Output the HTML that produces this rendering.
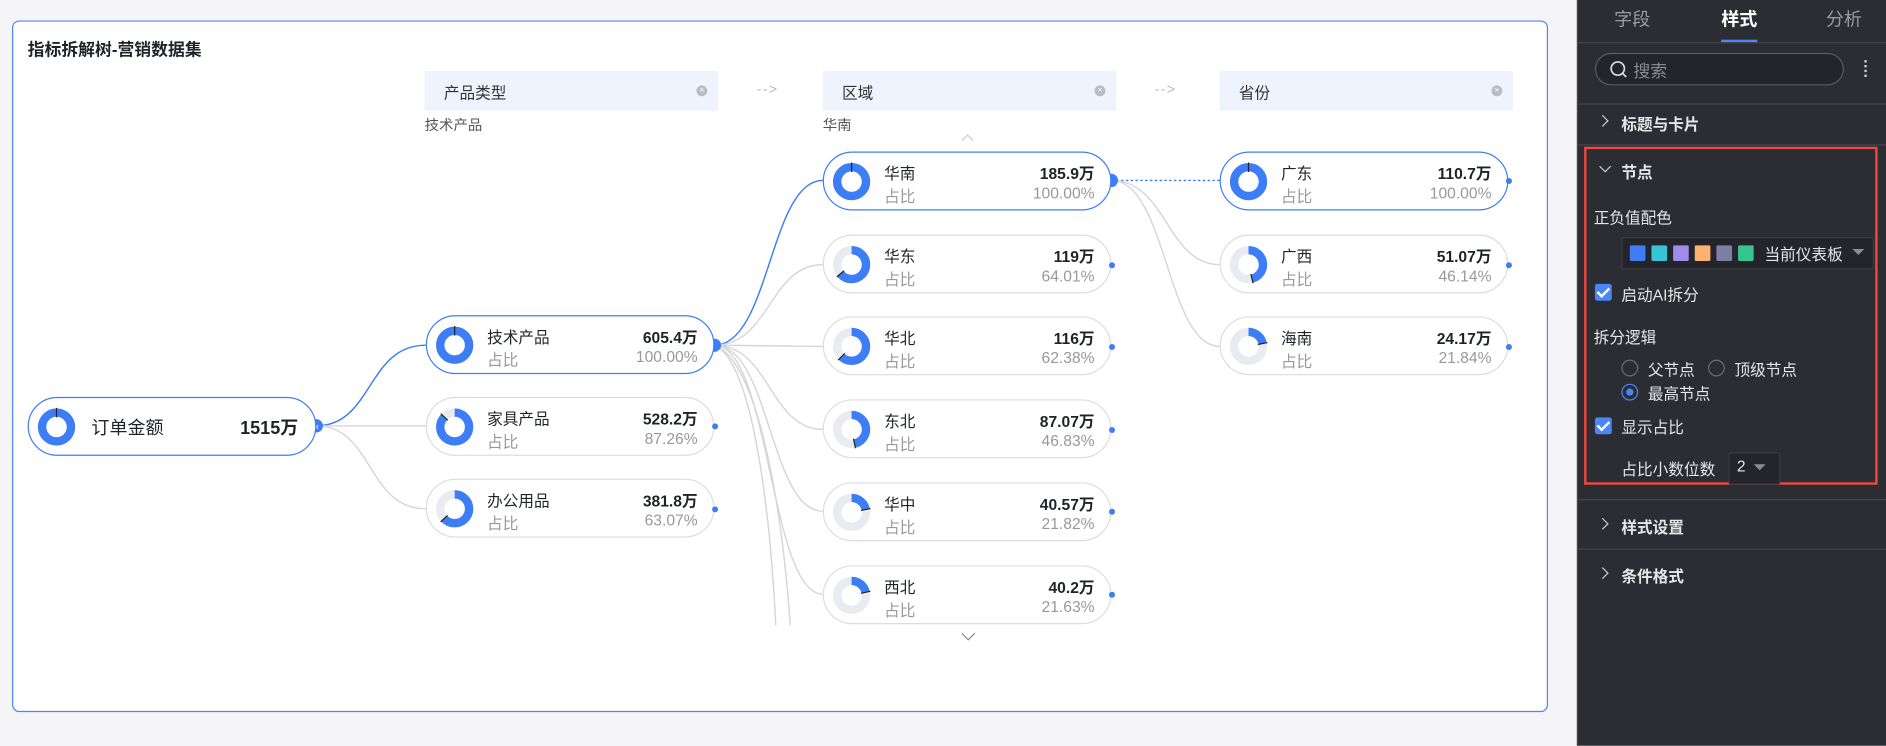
<!DOCTYPE html>
<html><head><meta charset="utf-8">
<style>
*{box-sizing:border-box;margin:0;padding:0}
html,body{width:1886px;height:746px;overflow:hidden;background:#f5f5f7}
body{font-family:"Liberation Sans","Noto Sans CJK SC",sans-serif;}
#w{position:absolute;left:0;top:0;width:1568px;height:620px;transform:scale(1.20281);transform-origin:0 0;background:#f5f5f7}
.card{position:absolute;left:10px;top:17px;width:1277px;height:575px;background:#fff;border:1px solid #4a86f7;border-radius:6px}
.t{position:absolute;left:23px;top:31px;font-size:14px;font-weight:bold;color:#1f2329}
.hd{position:absolute;top:59px;width:244px;height:33px;background:#eef3fd;font-size:13px;color:#333;padding:8px 0 0 16px}
.hd i{position:absolute;right:9px;top:12px;width:9px;height:9px;border-radius:50%;background:#b9bcc4;font-style:normal;color:#fff;font-size:7px;line-height:9px;text-align:center}
.ar{position:absolute;top:67px;color:#bbb;font-size:12px;letter-spacing:1px}
.sub{position:absolute;top:95px;font-size:12px;color:#555}
.n{position:absolute;width:240px;height:49px;border:1px solid #dcdde0;border-radius:25px;background:#fff;font-size:13px}
.n.s{border-color:#3d7ef7}
.n svg{position:absolute;left:7px;top:8px}
.nm{position:absolute;left:50px;top:7px;color:#1f2329}
.v{position:absolute;right:13px;top:7px;color:#1f2329;font-weight:600}
.l{position:absolute;left:50px;top:26px;color:#999}
.p{position:absolute;right:13px;top:26px;color:#999}
.dot{position:absolute;width:5px;height:5px;border-radius:50%;background:#3d7ef7}
.pn{position:absolute;left:1311px;top:0;width:257px;height:620px;background:#2c2d33;border-left:1px solid #45464d;color:#e6e6e8;font-size:13px}
.pn .x{position:absolute}
.ln{position:absolute;left:0;width:257px;height:1px;background:#45464d}
.cb{position:absolute;width:14px;height:14px;border-radius:2px;background:#4a86f7}
.cb:after{content:"";position:absolute;left:4px;top:1px;width:4px;height:8px;border:solid #fff;border-width:0 2px 2px 0;transform:rotate(45deg)}
.rd{position:absolute;width:14px;height:14px;border-radius:50%;border:1px solid #6c6d74}
.chev{position:absolute;width:7px;height:7px;border:solid #ccc;border-width:0 1.5px 1.5px 0}
</style></head><body><div id="w">
<div class="card"></div>
<div class="t">指标拆解树-营销数据集</div>

<div class="hd" style="left:353px">产品类型<i>×</i></div>
<div class="ar" style="left:629px">--&gt;</div>
<div class="hd" style="left:684px">区域<i>×</i></div>
<div class="ar" style="left:960px">--&gt;</div>
<div class="hd" style="left:1014px">省份<i>×</i></div>
<div class="sub" style="left:353px">技术产品</div>
<div class="sub" style="left:684px">华南</div>
<div style="position:absolute;left:801px;top:113px;width:7px;height:7px;border:solid #ccc;border-width:1px 0 0 1px;transform:rotate(45deg)"></div>
<div style="position:absolute;left:801px;top:523px;width:8px;height:8px;border:solid #888;border-width:0 1px 1px 0;transform:rotate(45deg)"></div>

<svg style="position:absolute;left:0;top:0" width="1290" height="600">
<g fill="none" stroke-width="1.2">
<path d="M263 354 C310 354,305 287,354 287" stroke="#3d7ef7"/>
<path d="M263 354 L354 354" stroke="#d6d6d6"/>
<path d="M263 354 C310 354,305 423,354 423" stroke="#d6d6d6"/>
<path d="M594 287 C640 287,640 150,684 150" stroke="#3d7ef7"/>
<path d="M594 287 C640 287,640 220,684 220" stroke="#d6d6d6"/>
<path d="M594 287 L684 288" stroke="#d6d6d6"/>
<path d="M594 287 C640 287,640 357,684 357" stroke="#d6d6d6"/>
<path d="M594 287 C640 287,640 425,684 425" stroke="#d6d6d6"/>
<path d="M594 287 C640 287,640 494,684 494" stroke="#d6d6d6"/>
<path d="M594 287 C630 300,650 420,657 520" stroke="#d6d6d6"/>
<path d="M594 287 C625 300,640 420,645 520" stroke="#d6d6d6"/>
<path d="M924 150 L1014 150" stroke="#3d7ef7" stroke-dasharray="2 2"/>
<path d="M924 150 C970 150,970 220,1014 220" stroke="#d6d6d6"/>
<path d="M924 150 C970 150,970 288,1014 288" stroke="#d6d6d6"/>
</g>
<circle cx="263" cy="354" r="5.5" fill="#3d7ef7"/><text x="263" y="357.5" font-size="8" fill="#fff" text-anchor="middle" font-family="Liberation Sans">×</text>
<circle cx="594" cy="287" r="5.5" fill="#3d7ef7"/>
<circle cx="924" cy="150" r="5.5" fill="#3d7ef7"/>
</svg>

<div class="n s" style="left:23px;top:330px;width:240px"><svg width="32" height="32"><circle cx="16" cy="16" r="12" fill="none" stroke="#e9ebf1" stroke-width="7"/><circle cx="16" cy="16" r="12" fill="none" stroke="#3d7ef7" stroke-width="7" stroke-dasharray="75.4 80" transform="rotate(-90 16 16)"/><line x1="16" y1="8" x2="16" y2="0" stroke="#222" stroke-width="1"/></svg><span class="nm" style="font-size:15px;top:14px;left:52px">订单金额</span><span class="v" style="font-size:15px;top:14px;right:14px">1515万</span></div>

<div class="n s" style="left:354px;top:262px"><svg width="32" height="32"><circle cx="16" cy="16" r="12" fill="none" stroke="#e9ebf1" stroke-width="7"/><circle cx="16" cy="16" r="12" fill="none" stroke="#3d7ef7" stroke-width="7" stroke-dasharray="75.4 80" transform="rotate(-90 16 16)"/><line x1="16" y1="8" x2="16" y2="0" stroke="#222"/></svg><span class="nm">技术产品</span><span class="v">605.4万</span><span class="l">占比</span><span class="p">100.00%</span></div>
<div class="n" style="left:354px;top:330px"><svg width="32" height="32"><circle cx="16" cy="16" r="12" fill="none" stroke="#e9ebf1" stroke-width="7"/><circle cx="16" cy="16" r="12" fill="none" stroke="#3d7ef7" stroke-width="7" stroke-dasharray="65.8 80" transform="rotate(-90 16 16)"/><line x1="10.3" y1="10.4" x2="4.5" y2="4.9" stroke="#222"/></svg><span class="nm">家具产品</span><span class="v">528.2万</span><span class="l">占比</span><span class="p">87.26%</span></div>
<div class="n" style="left:354px;top:398px"><svg width="32" height="32"><circle cx="16" cy="16" r="12" fill="none" stroke="#e9ebf1" stroke-width="7"/><circle cx="16" cy="16" r="12" fill="none" stroke="#3d7ef7" stroke-width="7" stroke-dasharray="47.6 80" transform="rotate(-90 16 16)"/><line x1="10.1" y1="21.5" x2="4.3" y2="26.9" stroke="#222"/></svg><span class="nm">办公用品</span><span class="v">381.8万</span><span class="l">占比</span><span class="p">63.07%</span></div>

<div class="n s" style="left:684px;top:126px"><svg width="32" height="32"><circle cx="16" cy="16" r="12" fill="none" stroke="#e9ebf1" stroke-width="7"/><circle cx="16" cy="16" r="12" fill="none" stroke="#3d7ef7" stroke-width="7" stroke-dasharray="75.4 80" transform="rotate(-90 16 16)"/><line x1="16" y1="8" x2="16" y2="0" stroke="#222"/></svg><span class="nm">华南</span><span class="v">185.9万</span><span class="l">占比</span><span class="p">100.00%</span></div>
<div class="n" style="left:684px;top:195px"><svg width="32" height="32"><circle cx="16" cy="16" r="12" fill="none" stroke="#e9ebf1" stroke-width="7"/><circle cx="16" cy="16" r="12" fill="none" stroke="#3d7ef7" stroke-width="7" stroke-dasharray="48.3 80" transform="rotate(-90 16 16)"/><line x1="9.8" y1="21.1" x2="3.7" y2="26.2" stroke="#222"/></svg><span class="nm">华东</span><span class="v">119万</span><span class="l">占比</span><span class="p">64.01%</span></div>
<div class="n" style="left:684px;top:263px"><svg width="32" height="32"><circle cx="16" cy="16" r="12" fill="none" stroke="#e9ebf1" stroke-width="7"/><circle cx="16" cy="16" r="12" fill="none" stroke="#3d7ef7" stroke-width="7" stroke-dasharray="47 80" transform="rotate(-90 16 16)"/><line x1="10.4" y1="21.7" x2="4.8" y2="27.4" stroke="#222"/></svg><span class="nm">华北</span><span class="v">116万</span><span class="l">占比</span><span class="p">62.38%</span></div>
<div class="n" style="left:684px;top:332px"><svg width="32" height="32"><circle cx="16" cy="16" r="12" fill="none" stroke="#e9ebf1" stroke-width="7"/><circle cx="16" cy="16" r="12" fill="none" stroke="#3d7ef7" stroke-width="7" stroke-dasharray="35.3 80" transform="rotate(-90 16 16)"/><line x1="17.6" y1="23.8" x2="19.2" y2="31.7" stroke="#222"/></svg><span class="nm">东北</span><span class="v">87.07万</span><span class="l">占比</span><span class="p">46.83%</span></div>
<div class="n" style="left:684px;top:401px"><svg width="32" height="32"><circle cx="16" cy="16" r="12" fill="none" stroke="#e9ebf1" stroke-width="7"/><circle cx="16" cy="16" r="12" fill="none" stroke="#3d7ef7" stroke-width="7" stroke-dasharray="16.45 80" transform="rotate(-90 16 16)"/><line x1="23.8" y1="14.4" x2="31.7" y2="12.8" stroke="#222"/></svg><span class="nm">华中</span><span class="v">40.57万</span><span class="l">占比</span><span class="p">21.82%</span></div>
<div class="n" style="left:684px;top:470px"><svg width="32" height="32"><circle cx="16" cy="16" r="12" fill="none" stroke="#e9ebf1" stroke-width="7"/><circle cx="16" cy="16" r="12" fill="none" stroke="#3d7ef7" stroke-width="7" stroke-dasharray="16.3 80" transform="rotate(-90 16 16)"/><line x1="23.8" y1="14.3" x2="31.6" y2="12.6" stroke="#222"/></svg><span class="nm">西北</span><span class="v">40.2万</span><span class="l">占比</span><span class="p">21.63%</span></div>

<div class="n s" style="left:1014px;top:126px"><svg width="32" height="32"><circle cx="16" cy="16" r="12" fill="none" stroke="#e9ebf1" stroke-width="7"/><circle cx="16" cy="16" r="12" fill="none" stroke="#3d7ef7" stroke-width="7" stroke-dasharray="75.4 80" transform="rotate(-90 16 16)"/><line x1="16" y1="8" x2="16" y2="0" stroke="#222"/></svg><span class="nm">广东</span><span class="v">110.7万</span><span class="l">占比</span><span class="p">100.00%</span></div>
<div class="n" style="left:1014px;top:195px"><svg width="32" height="32"><circle cx="16" cy="16" r="12" fill="none" stroke="#e9ebf1" stroke-width="7"/><circle cx="16" cy="16" r="12" fill="none" stroke="#3d7ef7" stroke-width="7" stroke-dasharray="34.8 80" transform="rotate(-90 16 16)"/><line x1="17.9" y1="23.8" x2="19.8" y2="31.5" stroke="#222"/></svg><span class="nm">广西</span><span class="v">51.07万</span><span class="l">占比</span><span class="p">46.14%</span></div>
<div class="n" style="left:1014px;top:263px"><svg width="32" height="32"><circle cx="16" cy="16" r="12" fill="none" stroke="#e9ebf1" stroke-width="7"/><circle cx="16" cy="16" r="12" fill="none" stroke="#3d7ef7" stroke-width="7" stroke-dasharray="16.5 80" transform="rotate(-90 16 16)"/><line x1="23.8" y1="14.4" x2="31.7" y2="12.8" stroke="#222"/></svg><span class="nm">海南</span><span class="v">24.17万</span><span class="l">占比</span><span class="p">21.84%</span></div>

<div class="dot" style="left:592px;top:352px"></div>
<div class="dot" style="left:592px;top:421px"></div>
<div class="dot" style="left:922px;top:218px"></div>
<div class="dot" style="left:922px;top:286px"></div>
<div class="dot" style="left:922px;top:355px"></div>
<div class="dot" style="left:922px;top:423px"></div>
<div class="dot" style="left:922px;top:492px"></div>
<div class="dot" style="left:1252px;top:148px"></div>
<div class="dot" style="left:1252px;top:218px"></div>
<div class="dot" style="left:1252px;top:286px"></div>

<div class="pn">
<div class="x" style="left:30px;top:5px;font-size:15px;color:#9a9ba1">字段</div>
<div class="x" style="left:119px;top:5px;font-size:15px;color:#fff;font-weight:bold">样式</div>
<div class="x" style="left:206px;top:5px;font-size:15px;color:#9a9ba1">分析</div>
<div class="x" style="left:119px;top:33px;width:30px;height:2px;background:#4a86f7"></div>
<div class="ln" style="top:35px"></div>
<div class="x" style="left:14px;top:44px;width:207px;height:27px;border:1px solid #5a5b62;border-radius:14px;background:#24252a"></div>
<svg class="x" style="left:26px;top:50px" width="16" height="16"><circle cx="7" cy="7" r="5.5" fill="none" stroke="#ddd" stroke-width="1.4"/><line x1="11" y1="11" x2="14" y2="14" stroke="#ddd" stroke-width="1.4"/></svg>
<div class="x" style="left:46px;top:49px;font-size:14px;color:#8a8b92">搜索</div>
<div class="x" style="left:238px;top:50px;width:2px;height:14px;border-left:2px dotted #ccc"></div>
<div class="ln" style="top:86px"></div>
<div class="chev" style="left:17px;top:97px;transform:rotate(-45deg)"></div>
<div class="x" style="left:36px;top:93px;font-weight:bold">标题与卡片</div>
<div class="ln" style="top:120px"></div>
<div class="x" style="left:5px;top:122px;width:244px;height:281px;border:2px solid #f0483e"></div>
<div class="chev" style="left:19px;top:135px;transform:rotate(45deg)"></div>
<div class="x" style="left:36px;top:133px;font-weight:bold">节点</div>
<div class="x" style="left:13px;top:171px">正负值配色</div>
<div class="x" style="left:36px;top:197px;width:210px;height:27px;background:#24252a;border:1px solid #3b3c42;border-radius:2px"></div>
<div class="x" style="left:43px;top:204px;width:13px;height:13px;background:#3d7ef7;border-radius:1px"></div>
<div class="x" style="left:61px;top:204px;width:13px;height:13px;background:#36c5d5;border-radius:1px"></div>
<div class="x" style="left:79px;top:204px;width:13px;height:13px;background:#a18ceb;border-radius:1px"></div>
<div class="x" style="left:97px;top:204px;width:13px;height:13px;background:#fdb172;border-radius:1px"></div>
<div class="x" style="left:115px;top:204px;width:13px;height:13px;background:#7b7fa6;border-radius:1px"></div>
<div class="x" style="left:133px;top:204px;width:13px;height:13px;background:#35c58f;border-radius:1px"></div>
<div class="x" style="left:155px;top:201px">当前仪表板</div>
<div class="x" style="left:228px;top:207px;border:5px solid transparent;border-top:5px solid #8a8b92"></div>
<div class="cb" style="left:14px;top:236px"></div>
<div class="x" style="left:36px;top:235px">启动AI拆分</div>
<div class="x" style="left:13px;top:270px">拆分逻辑</div>
<div class="rd" style="left:36px;top:299px"></div>
<div class="x" style="left:58px;top:297px">父节点</div>
<div class="rd" style="left:108px;top:299px"></div>
<div class="x" style="left:130px;top:297px">顶级节点</div>
<div class="rd" style="left:36px;top:319px;border-color:#4a86f7"><div style="position:absolute;left:3px;top:3px;width:6px;height:6px;border-radius:50%;background:#4a86f7"></div></div>
<div class="x" style="left:58px;top:317px">最高节点</div>
<div class="cb" style="left:14px;top:347px"></div>
<div class="x" style="left:36px;top:345px">显示占比</div>
<div class="x" style="left:36px;top:380px">占比小数位数</div>
<div class="x" style="left:125px;top:376px;width:43px;height:27px;background:#24252a;border:1px solid #3b3c42;border-radius:2px"></div>
<div class="x" style="left:132px;top:380px">2</div>
<div class="x" style="left:146px;top:386px;border:5px solid transparent;border-top:5px solid #8a8b92"></div>
<div class="ln" style="top:415px"></div>
<div class="chev" style="left:17px;top:432px;transform:rotate(-45deg)"></div>
<div class="x" style="left:36px;top:428px;font-weight:bold">样式设置</div>
<div class="ln" style="top:456px"></div>
<div class="chev" style="left:17px;top:473px;transform:rotate(-45deg)"></div>
<div class="x" style="left:36px;top:469px;font-weight:bold">条件格式</div>
</div>
</div>
</body></html>
